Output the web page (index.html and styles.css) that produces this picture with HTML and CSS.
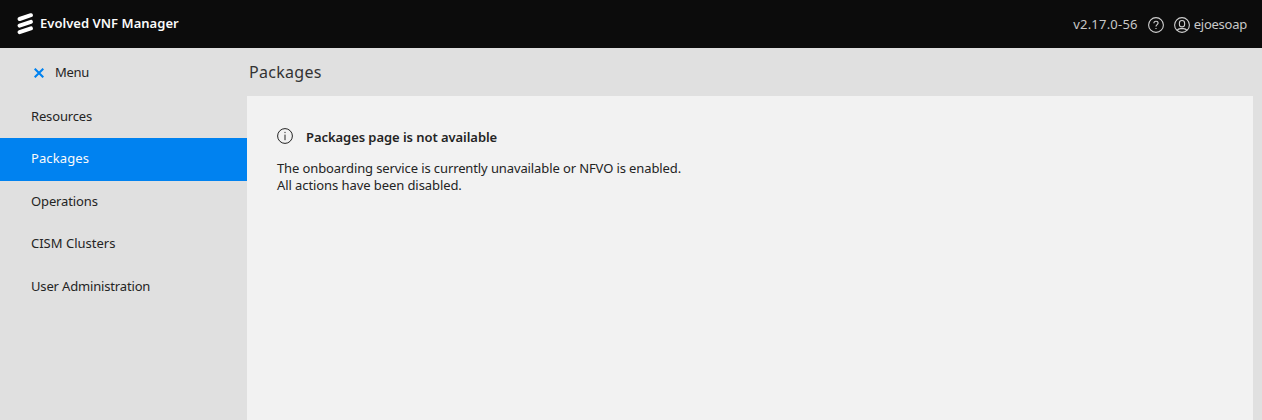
FILE: index.html
```html
<!DOCTYPE html>
<html lang="en">
<head>
<meta charset="utf-8">
<title>Evolved VNF Manager</title>
<link rel="stylesheet" href="styles.css">
</head>
<body>
<header class="topbar">
  <svg class="logo" width="16" height="22" viewBox="0 0 16 22"><path d="M2.6 6 13.9 2.2M2.6 12.6 13.9 8.8M2.6 19.2 13.9 15.4" fill="none" stroke="#fff" stroke-width="4" stroke-linecap="round"/></svg>
  <span class="product">Evolved VNF Manager</span>
  <span class="version">v2.17.0-56</span>
  <svg class="help" width="16" height="16" viewBox="0 0 16 16" fill="none" stroke="#d0d0d0" stroke-width="1.1"><circle cx="8" cy="8" r="7.4"/><path d="M5.9 6.2C5.9 4.9 6.8 4.2 8 4.2s2.1.8 2.1 1.9c0 1.5-2.1 1.6-2.1 3.4M8 10.9v1.2"/></svg>
  <svg class="user" width="16" height="16" viewBox="0 0 16 16" fill="none" stroke="#d0d0d0" stroke-width="1.1"><circle cx="8" cy="8" r="7.4"/><rect x="5.4" y="3.5" width="5.2" height="6.4" rx="2.5"/><path d="M3 13.4C4 12 5.2 11.6 6.5 11.6h3c1.3 0 2.5.4 3.5 1.8"/></svg>
  <span class="username">ejoesoap</span>
</header>
<div class="layout">
  <nav class="sidebar">
    <div class="menu-toggle">
      <svg width="10" height="10" viewBox="0 0 10 10"><path d="M.7.7 9.3 9.3M9.3.7.7 9.3" stroke="#0082f0" stroke-width="2.1"/></svg>
      <span class="menu-label">Menu</span>
    </div>
    <a class="nav-item"><span class="resources">Resources</span></a>
    <a class="nav-item active"><span class="packages">Packages</span></a>
    <a class="nav-item"><span class="operations">Operations</span></a>
    <a class="nav-item"><span class="clusters">CISM Clusters</span></a>
    <a class="nav-item"><span class="users">User Administration</span></a>
  </nav>
  <main class="content">
    <h1 class="page-title">Packages</h1>
    <section class="panel">
      <div class="notice">
        <svg width="16" height="16" viewBox="0 0 16 16" fill="none" stroke="#242424"><circle cx="8" cy="8" r="7.4"/><path d="M8 6.6v5.6M8 3.9v1.2"/></svg>
        <h2 class="notice-title">Packages page is not available</h2>
      </div>
      <p class="message"><span class="reason">The onboarding service is currently unavailable or NFVO is enabled.</span><br><span class="effect">All actions have been disabled.</span></p>
    </section>
  </main>
</div>
</body>
</html>
```
FILE: styles.css
```css
* { box-sizing: border-box; }
body {
  margin: 0;
  height: 420px;
  display: flex;
  flex-direction: column;
  overflow: hidden;
  background: #e0e0e0;
  color: #242424;
  font: 13px/17px "Noto Sans", "Open Sans", sans-serif;
}
svg { display: block; flex: none; }
span, h1, h2 { white-space: nowrap; }
.topbar {
  height: 48px;
  flex: none;
  display: flex;
  align-items: center;
  padding: 0 15px 0 17px;
  background: #0c0c0c;
  color: #c8c8c8;
}
.product { margin: 0 auto 2px 7px; font-weight: 600; letter-spacing: 0.03px; color: #fafafa; }
.version { letter-spacing: 0.22px; }
.help { margin: 2px 0 0 10px; }
.user { margin: 2px 4px 0 10px; }
.username { letter-spacing: -0.25px; }
.layout { flex: 1; display: flex; }
.sidebar { width: 247px; flex: none; }
.menu-toggle { height: 47.5px; display: flex; align-items: center; gap: 11px; padding: 2px 0 0 34px; }
.menu-label { letter-spacing: -0.3px; }
.nav-item { display: flex; align-items: center; height: 42.5px; padding: 0 0 1px 31px; }
.active { background: #0082f0; color: #fafafa; }
.resources { letter-spacing: -0.15px; }
.packages { letter-spacing: 0.1px; }
.operations { letter-spacing: -0.12px; }
.users { letter-spacing: -0.16px; }
.content { flex: 1; display: flex; flex-direction: column; padding-right: 9px; }
.page-title { height: 48px; margin: 0; padding-left: 2px; font-size: 16px; line-height: 48px; font-weight: 400; letter-spacing: 0.28px; color: #333; }
.panel { flex: 1; padding: 32px 30px; background: #f2f2f2; }
.notice { display: flex; gap: 13px; }
.notice-title { margin: 1px 0 0; font-size: 13px; line-height: 17px; font-weight: 600; letter-spacing: -0.06px; }
.message { margin: 14px 0 0; }
.reason { letter-spacing: -0.11px; }
.effect { letter-spacing: -0.08px; }
```
